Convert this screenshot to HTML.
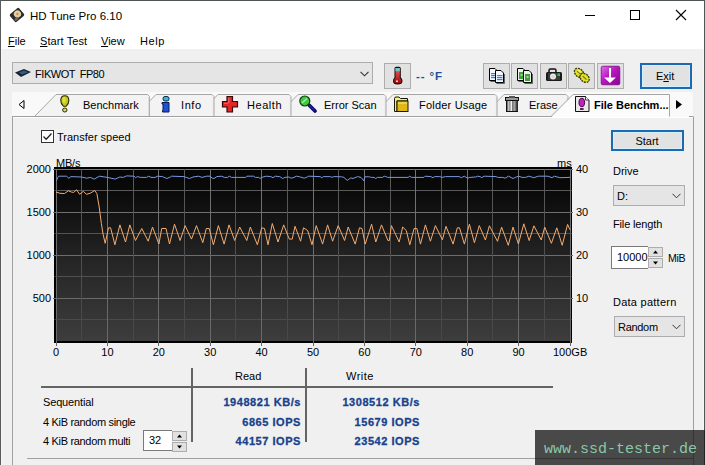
<!DOCTYPE html>
<html><head><meta charset="utf-8"><style>
html,body{margin:0;padding:0;width:705px;height:465px;overflow:hidden;background:#f0f0f0}
.b{position:absolute}
.t{position:absolute;white-space:nowrap;font-family:'Liberation Sans', sans-serif}
u{text-decoration:underline;text-underline-offset:1px}
</style></head><body>
<div class="b" style="left:0px;top:0px;width:705px;height:465px;background:#f0f0f0"></div>
<div class="b" style="left:0px;top:0px;width:705px;height:49px;background:#ffffff"></div>
<div class="b" style="left:1px;top:49px;width:1px;height:416px;background:#f7f7f7"></div>
<div class="b" style="left:703px;top:49px;width:1px;height:416px;background:#f7f7f7"></div>
<div class="b" style="left:0px;top:0px;width:705px;height:1px;background:#4f5454"></div>
<div class="b" style="left:0px;top:0px;width:1px;height:465px;background:#585c5c"></div>
<div class="b" style="left:704px;top:0px;width:1px;height:465px;background:#4f5454"></div>
<svg class="b" style="left:8px;top:6px" width="18" height="18" viewBox="0 0 18 18">
<g transform="rotate(-40 9 9)"><rect x="3" y="4" width="12" height="10" rx="1.5" fill="#2a2a2a"/>
<circle cx="10" cy="8.5" r="3.6" fill="#e9cfa0"/><circle cx="10" cy="8.5" r="1.2" fill="#b89660"/>
<rect x="4" y="10.5" width="4" height="2.5" fill="#6a6a6a"/></g></svg>
<div class="t" style="left:30px;top:11px;font-size:11.5px;line-height:11.5px;color:#000;font-weight:normal;">HD Tune Pro 6.10</div>
<div class="b" style="left:585px;top:15px;width:10px;height:1px;background:#000"></div>
<div class="b" style="left:630px;top:10px;width:10px;height:10px;border:1px solid #000;box-sizing:border-box"></div>
<svg class="b" style="left:675px;top:9px" width="12" height="12" viewBox="0 0 12 12">
<path d="M1 1L11 11M11 1L1 11" stroke="#000" stroke-width="1.1"/></svg>
<div class="t" style="left:8px;top:36px;font-size:11px;line-height:11px;color:#000"><u>F</u>ile</div>
<div class="t" style="left:40px;top:36px;font-size:11px;line-height:11px;color:#000;letter-spacing:0.1px"><u>S</u>tart Test</div>
<div class="t" style="left:101px;top:36px;font-size:11px;line-height:11px;color:#000"><u>V</u>iew</div>
<div class="t" style="left:140px;top:36px;font-size:11px;line-height:11px;color:#000;letter-spacing:0.6px">Help</div>
<div class="b" style="left:12px;top:62px;width:361px;height:22px;background:#e5e5e5;border:1px solid #adadad;box-sizing:border-box"></div>
<svg class="b" style="left:14px;top:68px" width="18" height="10" viewBox="0 0 18 10">
<path d="M1 4.5L10 1L17 4L7 9Z" fill="#1a2430"/><path d="M5 4.5L10 2.5L14 4.2L8 6.5Z" fill="#2d5d8f"/></svg>
<div class="t" style="left:35px;top:69px;font-size:11px;line-height:11px;color:#000;font-weight:normal;letter-spacing:-0.45px;word-spacing:2px">FIKWOT&nbsp;FP80</div>
<svg class="b" style="left:360px;top:71px" width="9" height="6" viewBox="0 0 9 6">
<path d="M0.5 0.8L4.5 4.8L8.5 0.8" fill="none" stroke="#333" stroke-width="1.1"/></svg>
<div class="b" style="left:384px;top:63px;width:27px;height:26px;background:#e1e1e1;border:1px solid #adadad;box-sizing:border-box"></div>
<svg class="b" style="left:391px;top:66px" width="13" height="20" viewBox="0 0 13 20">
<defs><linearGradient id="th" x1="0" y1="0" x2="0" y2="1"><stop offset="0" stop-color="#f06060"/><stop offset="1" stop-color="#a00808"/></linearGradient></defs>
<path d="M3.5 2.5Q3.5 0.8 5.2 0.8H8Q9.8 0.8 9.8 2.5V11.5Q11.5 12.8 11.5 15Q11.5 18.5 6.7 18.5Q2 18.5 2 15Q2 12.8 3.5 11.5Z" fill="#1a0505"/>
<path d="M4.5 2.2H8.8V11.9Q10.5 13 10.5 15Q10.5 17.5 6.7 17.5Q3 17.5 3 15Q3 13 4.5 11.9Z" fill="url(#th)"/>
<rect x="4.5" y="2" width="4.3" height="3.2" fill="#70c8c8"/>
<rect x="5" y="14.5" width="2" height="1.6" fill="#f8d0d0"/></svg>
<div class="t" style="left:416px;top:71px;font-size:11.5px;line-height:11.5px;color:#1f4e9a;font-weight:bold;letter-spacing:0.9px">--&nbsp;°F</div>
<div class="b" style="left:483px;top:63px;width:27px;height:26px;background:#e1e1e1;border:1px solid #adadad;box-sizing:border-box"></div>
<div class="b" style="left:511px;top:63px;width:27px;height:26px;background:#e1e1e1;border:1px solid #adadad;box-sizing:border-box"></div>
<div class="b" style="left:540px;top:63px;width:27px;height:26px;background:#e1e1e1;border:1px solid #adadad;box-sizing:border-box"></div>
<div class="b" style="left:568px;top:63px;width:27px;height:26px;background:#e1e1e1;border:1px solid #adadad;box-sizing:border-box"></div>
<div class="b" style="left:597px;top:63px;width:27px;height:26px;background:#e1e1e1;border:1px solid #adadad;box-sizing:border-box"></div>
<svg class="b" style="left:489px;top:68px" width="17" height="16" viewBox="0 0 17 16"><path d="M0.5 0.5H6L8.5 3V12.5H0.5Z" fill="#f4f8ff" stroke="#000" stroke-width="1"/><path d="M9.5 4V13.5H1.5" fill="none" stroke="#444" stroke-width="0.8"/><rect x="2" y="5" width="5.5" height="1.2" fill="#3080e0"/><rect x="2" y="7" width="5.5" height="1.2" fill="#3080e0"/><rect x="2" y="9" width="5.5" height="1.2" fill="#3080e0"/><path d="M6.5 2.5H12L14.5 5V14.5H6.5Z" fill="#f4f8ff" stroke="#000" stroke-width="1"/><path d="M15.5 6V15.5H7.5" fill="none" stroke="#444" stroke-width="0.8"/><rect x="8" y="7" width="5.5" height="1.2" fill="#3080e0"/><rect x="8" y="9" width="5.5" height="1.2" fill="#3080e0"/><rect x="8" y="11" width="5.5" height="1.2" fill="#3080e0"/></svg>
<svg class="b" style="left:517px;top:68px" width="17" height="16" viewBox="0 0 17 16"><path d="M0.5 0.5H6L8.5 3V12.5H0.5Z" fill="#f0f4f0" stroke="#000" stroke-width="1"/><path d="M9.5 4V13.5H1.5" fill="none" stroke="#444" stroke-width="0.8"/><rect x="2" y="4" width="5" height="7" fill="#3aa040"/><rect x="3.5" y="6" width="2" height="2" fill="#a0e060"/><path d="M6.5 2.5H12L14.5 5V14.5H6.5Z" fill="#f0f4f0" stroke="#000" stroke-width="1"/><path d="M15.5 6V15.5H7.5" fill="none" stroke="#444" stroke-width="0.8"/><rect x="8" y="6" width="5" height="7" fill="#3aa040"/><rect x="9.5" y="8" width="2" height="2" fill="#a0e060"/></svg>
<svg class="b" style="left:545px;top:68px" width="18" height="14" viewBox="0 0 18 14">
<rect x="4" y="1" width="7" height="4" rx="1.5" fill="none" stroke="#111" stroke-width="1.5"/>
<rect x="1" y="4" width="16" height="9" rx="1.5" fill="#1a1a1a"/>
<rect x="3" y="5" width="12" height="7" fill="#3a3a3a"/>
<circle cx="8" cy="8.5" r="3" fill="#f0f0f0"/><circle cx="8" cy="8.5" r="2" fill="#d8d8d8"/>
<rect x="12.5" y="5.5" width="2.5" height="2.5" fill="#30c050"/></svg>
<svg class="b" style="left:572px;top:66px" width="20" height="19" viewBox="0 0 20 19">
<g transform="rotate(42 10 9.5)">
<ellipse cx="6" cy="9.5" rx="5.2" ry="3.8" fill="#e0e028" stroke="#3a3a00" stroke-width="1.3" stroke-dasharray="2 0.8"/>
<ellipse cx="13.5" cy="9.5" rx="5.2" ry="3.8" fill="#e0e028" stroke="#3a3a00" stroke-width="1.3" stroke-dasharray="2 0.8"/>
<path d="M3.5 9.5h5M11 9.5h5" stroke="#6a6a10" stroke-width="1"/>
<ellipse cx="5" cy="8" rx="2" ry="1" fill="#f8f890" opacity="0.8"/>
</g></svg>
<svg class="b" style="left:600px;top:65px" width="21" height="21" viewBox="0 0 21 21">
<defs><linearGradient id="mg" x1="0" y1="0" x2="1" y2="1"><stop offset="0" stop-color="#e070e8"/><stop offset="0.45" stop-color="#b818c0"/><stop offset="1" stop-color="#8a0090"/></linearGradient></defs>
<rect x="0.5" y="0.5" width="20" height="20" rx="2" fill="#f8f0f8"/>
<rect x="1.2" y="1.2" width="18.6" height="18.6" rx="1.5" fill="url(#mg)" stroke="#70007a" stroke-width="0.8"/>
<path d="M9 3H11V12.5H15.9L10 18L4.1 12.5H9Z" fill="#fff"/></svg>
<div class="b" style="left:640px;top:63px;width:52px;height:26px;background:#e2e2e2;border:2px solid #1d6ab2;box-shadow:inset 0 0 0 1px #d4f0fc;box-sizing:border-box"></div>
<div class="t" style="left:656px;top:71px;font-size:11px;line-height:11px;color:#000;font-weight:normal;">E<u>x</u>it</div>
<div class="b" style="left:12px;top:92px;width:681px;height:25px;background:#f9f9f9"></div>
<svg class="b" style="left:0;top:0" width="705" height="125" viewBox="0 0 705 125"><path d="M482 117L504 95H566L568 97V117Z" fill="#f3f3f3"/><path d="M482 117L504 94.5H566L568 96.5V117" fill="none" stroke="#a6a6a6" stroke-width="1"/><path d="M567.4 97V116" stroke="#c8c8c8" stroke-width="0.8"/><path d="M371 117L393 95H495L497 97V117Z" fill="#f3f3f3"/><path d="M371 117L393 94.5H495L497 96.5V117" fill="none" stroke="#a6a6a6" stroke-width="1"/><path d="M496.4 97V116" stroke="#c8c8c8" stroke-width="0.8"/><path d="M276 117L298 95H384L386 97V117Z" fill="#f3f3f3"/><path d="M276 117L298 94.5H384L386 96.5V117" fill="none" stroke="#a6a6a6" stroke-width="1"/><path d="M385.4 97V116" stroke="#c8c8c8" stroke-width="0.8"/><path d="M196 117L218 95H289L291 97V117Z" fill="#f3f3f3"/><path d="M196 117L218 94.5H289L291 96.5V117" fill="none" stroke="#a6a6a6" stroke-width="1"/><path d="M290.4 97V116" stroke="#c8c8c8" stroke-width="0.8"/><path d="M134 117L156 95H212L214 97V117Z" fill="#f3f3f3"/><path d="M134 117L156 94.5H212L214 96.5V117" fill="none" stroke="#a6a6a6" stroke-width="1"/><path d="M213.4 97V116" stroke="#c8c8c8" stroke-width="0.8"/><path d="M34 117L56 95H147.5L149.5 97V117Z" fill="#f3f3f3"/><path d="M34 117L56 94.5H147.5L149.5 96.5V117" fill="none" stroke="#a6a6a6" stroke-width="1"/><path d="M148.9 97V116" stroke="#c8c8c8" stroke-width="0.8"/><path d="M12 116.5H560" stroke="#a0a0a0" stroke-width="1"/><path d="M669 116.5H690" stroke="#fafafa" stroke-width="1"/><path d="M689 116.5H693.5" stroke="#a0a0a0" stroke-width="1"/><path d="M551 117.5L573 95H669.5V117.5Z" fill="#fcfcfc"/><path d="M551 116.5L573 94.5H669.5V116.5" fill="none" stroke="#a6a6a6" stroke-width="1"/><path d="M24 100.5L19 104.5L24 108.5Z" fill="#f9f9f9" stroke="#000" stroke-width="1"/><path d="M676 100L682 104.5L676 109Z" fill="#000"/></svg>
<svg class="b" style="left:59px;top:95px" width="12" height="18" viewBox="0 0 12 18">
<path d="M5.8 0.8Q9.8 0.8 9.8 5.5Q9.8 9 7.2 11.2H4.4Q1.8 9 1.8 5.5Q1.8 0.8 5.8 0.8Z" fill="#c8c818" stroke="#2a2a00" stroke-width="1.1"/>
<ellipse cx="5" cy="5" rx="1.6" ry="3" fill="#e8e860" opacity="0.7"/>
<ellipse cx="5.8" cy="15" rx="2.2" ry="2" fill="#d8d870" stroke="#2a2a00" stroke-width="1"/></svg>
<svg class="b" style="left:160px;top:95px" width="12" height="18" viewBox="0 0 12 18">
<rect x="3" y="1.5" width="6" height="4.5" rx="2" fill="#40b0e0" stroke="#0a2a40" stroke-width="1"/>
<path d="M2 7.5H9V17H2.5V15.5H3V9H2Z" fill="#2050d8" stroke="#0a1a50" stroke-width="1"/></svg>
<svg class="b" style="left:221px;top:95px" width="18" height="18" viewBox="0 0 18 18">
<path d="M6 1.5H11.5V6.5H16.5V12H11.5V17H6V12H1.5V6.5H6Z" fill="#e02828" stroke="#3a0808" stroke-width="1.2"/>
<path d="M7 3H8.5V8H3V9H7Z" fill="#f08080" opacity="0.6"/></svg>
<svg class="b" style="left:298px;top:95px" width="19" height="19" viewBox="0 0 19 19">
<path d="M11.5 10.5L17 16" stroke="#0a0a60" stroke-width="3.6" stroke-linecap="round"/>
<path d="M11.5 10.5L16 15" stroke="#2020b0" stroke-width="1.6" stroke-linecap="round"/>
<circle cx="6.8" cy="6" r="5" fill="#40c840" stroke="#0a400a" stroke-width="1.2"/>
<path d="M4 8L9 3.5" stroke="#a0f0a0" stroke-width="1.5"/></svg>
<svg class="b" style="left:393px;top:95px" width="18" height="18" viewBox="0 0 18 18">
<path d="M1.5 3.5Q1.5 2 3 2H6L7.5 3.5H14.5V6H4V16.5H1.5Z" fill="#f0f080" stroke="#1a1a00" stroke-width="1"/>
<rect x="4" y="6" width="11" height="10.5" fill="#e0b818" stroke="#1a1a00" stroke-width="1"/>
<rect x="5" y="7" width="9" height="2" fill="#f0e060" opacity="0.7"/></svg>
<svg class="b" style="left:504px;top:95px" width="17" height="18" viewBox="0 0 17 18">
<rect x="1.5" y="2.5" width="13" height="3" fill="#9a9a9a" stroke="#111" stroke-width="1"/>
<rect x="5" y="1" width="6" height="2" fill="#555"/>
<rect x="2.5" y="5.5" width="11" height="11" fill="#7a7a7a" stroke="#111" stroke-width="1"/>
<rect x="4" y="6" width="1.5" height="10" fill="#c0c0c0"/><rect x="6.5" y="6" width="1.5" height="10" fill="#f0f0f0"/>
<rect x="9.5" y="6" width="1.5" height="10" fill="#a0a0a0"/><rect x="12" y="6" width="1.5" height="10" fill="#4a4a4a"/></svg>
<svg class="b" style="left:575px;top:95px" width="16" height="18" viewBox="0 0 16 18">
<path d="M0.5 1.5H10.5L14 5V16.5H0.5Z" fill="#e8e8e8" stroke="#111" stroke-width="1"/>
<path d="M10.5 1.5V5H14" fill="#fff" stroke="#111" stroke-width="0.8"/>
<ellipse cx="6.8" cy="7.5" rx="2.8" ry="4.2" fill="#c020c0" stroke="#400040" stroke-width="1"/>
<rect x="5" y="13" width="3.6" height="2" fill="#602060"/></svg>
<div class="t" style="left:83px;top:100px;font-size:11px;line-height:11px;color:#000;font-weight:normal;">Benchmark</div>
<div class="t" style="left:181px;top:100px;font-size:11px;line-height:11px;color:#000;font-weight:normal;letter-spacing:0.6px">Info</div>
<div class="t" style="left:247px;top:100px;font-size:11px;line-height:11px;color:#000;font-weight:normal;letter-spacing:0.55px">Health</div>
<div class="t" style="left:324px;top:100px;font-size:11px;line-height:11px;color:#000;font-weight:normal;">Error Scan</div>
<div class="t" style="left:419px;top:100px;font-size:11px;line-height:11px;color:#000;font-weight:normal;letter-spacing:0.2px">Folder Usage</div>
<div class="t" style="left:529px;top:100px;font-size:11px;line-height:11px;color:#000;font-weight:normal;">Erase</div>
<div class="t" style="left:594px;top:100px;font-size:11px;line-height:11px;color:#000;font-weight:bold;">File Benchm...</div>
<div class="b" style="left:12px;top:117px;width:1px;height:348px;background:#a0a0a0"></div>
<div class="b" style="left:693px;top:117px;width:1px;height:348px;background:#a0a0a0"></div>
<div class="b" style="left:13px;top:117px;width:680px;height:1px;background:#ffffff"></div>
<div class="b" style="left:41px;top:130px;width:13px;height:13px;background:#fff;border:1px solid #333;box-sizing:border-box"></div>
<svg class="b" style="left:41px;top:130px" width="13" height="13" viewBox="0 0 13 13">
<path d="M2.5 6.5L5.2 9.2L10.5 3.5" fill="none" stroke="#222" stroke-width="1.3"/></svg>
<div class="t" style="left:57px;top:132px;font-size:11px;line-height:11px;color:#000;font-weight:normal;">Transfer speed</div>
<svg class="b" style="left:0;top:0" width="705" height="465" viewBox="0 0 705 465"><defs><linearGradient id="g" x1="0" y1="0" x2="0" y2="1"><stop offset="0" stop-color="#050505"/><stop offset="0.14" stop-color="#0b0b0b"/><stop offset="0.55" stop-color="#262626"/><stop offset="1" stop-color="#3d3d3d"/></linearGradient><linearGradient id="glM" gradientUnits="userSpaceOnUse" x1="0" y1="169" x2="0" y2="341"><stop offset="0" stop-color="#727272"/><stop offset="1" stop-color="#686868"/></linearGradient><linearGradient id="glm" gradientUnits="userSpaceOnUse" x1="0" y1="169" x2="0" y2="341"><stop offset="0" stop-color="#5a5a5a"/><stop offset="1" stop-color="#474747"/></linearGradient></defs><rect x="54" y="167" width="518" height="176" fill="#000"/><rect x="56" y="169" width="515" height="172" fill="url(#g)"/><path d="M56 169.5H571" stroke="#787878" stroke-width="1"/><path d="M56 190.5H571" stroke="#5a5a5a" stroke-width="1"/><path d="M56 212.5H571" stroke="#707070" stroke-width="1"/><path d="M56 233.5H571" stroke="#545454" stroke-width="1"/><path d="M56 255.5H571" stroke="#6d6d6d" stroke-width="1"/><path d="M56 276.5H571" stroke="#505050" stroke-width="1"/><path d="M56 298.5H571" stroke="#6a6a6a" stroke-width="1"/><path d="M56 319.5H571" stroke="#4a4a4a" stroke-width="1"/><path d="M56 341.5H571" stroke="#686868" stroke-width="1"/><rect x="56.0" y="169" width="1" height="172" fill="url(#glM)"/><rect x="81.0" y="169" width="1" height="172" fill="url(#glm)"/><rect x="107.0" y="169" width="1" height="172" fill="url(#glM)"/><rect x="133.0" y="169" width="1" height="172" fill="url(#glm)"/><rect x="158.0" y="169" width="1" height="172" fill="url(#glM)"/><rect x="184.0" y="169" width="1" height="172" fill="url(#glm)"/><rect x="210.0" y="169" width="1" height="172" fill="url(#glM)"/><rect x="235.0" y="169" width="1" height="172" fill="url(#glm)"/><rect x="261.0" y="169" width="1" height="172" fill="url(#glM)"/><rect x="287.0" y="169" width="1" height="172" fill="url(#glm)"/><rect x="313.0" y="169" width="1" height="172" fill="url(#glM)"/><rect x="338.0" y="169" width="1" height="172" fill="url(#glm)"/><rect x="364.0" y="169" width="1" height="172" fill="url(#glM)"/><rect x="390.0" y="169" width="1" height="172" fill="url(#glm)"/><rect x="415.0" y="169" width="1" height="172" fill="url(#glM)"/><rect x="441.0" y="169" width="1" height="172" fill="url(#glm)"/><rect x="467.0" y="169" width="1" height="172" fill="url(#glM)"/><rect x="492.0" y="169" width="1" height="172" fill="url(#glm)"/><rect x="518.0" y="169" width="1" height="172" fill="url(#glM)"/><rect x="544.0" y="169" width="1" height="172" fill="url(#glm)"/><rect x="570.0" y="169" width="1" height="172" fill="url(#glM)"/><rect x="54" y="341" width="518" height="2" fill="#000"/><rect x="571" y="167" width="1" height="176" fill="#000"/><path d="M56.5 341V346" stroke="#686868" stroke-width="1"/><path d="M107.5 341V346" stroke="#686868" stroke-width="1"/><path d="M158.5 341V346" stroke="#686868" stroke-width="1"/><path d="M210.5 341V346" stroke="#686868" stroke-width="1"/><path d="M261.5 341V346" stroke="#686868" stroke-width="1"/><path d="M313.5 341V346" stroke="#686868" stroke-width="1"/><path d="M364.5 341V346" stroke="#686868" stroke-width="1"/><path d="M415.5 341V346" stroke="#686868" stroke-width="1"/><path d="M467.5 341V346" stroke="#686868" stroke-width="1"/><path d="M518.5 341V346" stroke="#686868" stroke-width="1"/><path d="M570.5 341V346" stroke="#686868" stroke-width="1"/><path d="M53 169.5H57M569 169.5H573" stroke="#727272" stroke-width="1"/><path d="M54 190.5H57M569 190.5H572" stroke="#5a5a5a" stroke-width="1" opacity="0.6"/><path d="M53 212.5H57M569 212.5H573" stroke="#707070" stroke-width="1"/><path d="M54 233.5H57M569 233.5H572" stroke="#545454" stroke-width="1" opacity="0.6"/><path d="M53 255.5H57M569 255.5H573" stroke="#6d6d6d" stroke-width="1"/><path d="M54 276.5H57M569 276.5H572" stroke="#505050" stroke-width="1" opacity="0.6"/><path d="M53 298.5H57M569 298.5H573" stroke="#6a6a6a" stroke-width="1"/><path d="M54 319.5H57M569 319.5H572" stroke="#4a4a4a" stroke-width="1" opacity="0.6"/><polyline points="56.0,192.0 60.0,193.3 64.5,193.5 68.3,190.8 71.3,192.0 73.6,192.4 76.6,189.8 79.6,194.3 83.4,191.3 86.4,194.3 90.1,193.3 94.7,190.5 96.9,193.6 99.2,207.0 101.4,223.7 103.0,234.0 105.2,243.3 108.5,227.8 110.6,227.8 114.9,244.8 119.9,224.9 125.5,242.0 129.8,224.9 135.5,240.5 141.8,228.5 148.2,241.2 152.5,227.0 158.9,244.0 161.7,228.5 166.0,228.5 169.5,244.0 174.5,224.2 180.1,240.5 185.1,225.6 191.5,239.1 196.5,225.6 202.8,242.7 206.3,228.5 209.2,228.5 213.4,244.8 218.4,225.6 224.1,244.1 229.0,224.9 234.7,240.5 239.7,227.0 246.8,240.5 250.3,227.0 257.4,244.8 261.7,227.8 264.5,228.5 268.0,244.8 272.3,223.5 278.0,242.0 283.7,224.9 289.3,239.1 292.2,239.1 295.0,226.3 300.6,241.2 303.5,227.8 307.7,230.6 312.0,244.8 316.2,225.6 322.6,244.1 327.6,224.9 332.6,241.2 338.2,225.6 344.6,240.5 348.2,227.0 355.2,244.1 359.5,227.8 362.0,228.5 365.2,244.1 371.6,224.2 375.8,242.0 381.5,224.9 387.9,240.5 389.3,240.5 391.4,225.6 399.2,242.0 402.7,227.0 406.3,230.6 409.8,244.8 414.1,228.5 416.9,228.5 420.5,244.1 425.4,224.9 430.4,241.2 435.4,225.6 442.4,239.8 446.0,226.3 453.1,244.1 457.3,227.8 459.5,227.8 464.4,244.1 469.4,224.2 474.4,242.7 479.3,225.6 485.4,240.0 489.4,225.8 497.5,241.3 501.6,227.1 508.3,245.3 513.0,227.1 518.4,244.0 523.8,223.8 529.2,240.6 533.9,225.8 541.3,240.0 544.7,227.1 551.4,243.3 556.8,227.8 562.2,245.3 567.6,224.4 570.0,229.8" fill="none" stroke="#f4ac70" stroke-width="1" stroke-linejoin="miter"/><polyline points="56.3,180.8 58.5,176.2 66.5,176.2 68.8,178.2 71.0,176.6 81.2,177.0 86.9,178.2 90.3,177.4 94.3,179.1 99.4,176.2 107.3,177.4 115.3,179.1 119.8,177.0 123.2,177.4 126.6,175.9 134.0,176.2 135.7,177.7 137.4,176.6 140.8,177.4 146.5,177.4 148.8,176.2 151.0,177.4 155.0,177.4 157.8,176.2 162.4,176.6 166.9,178.5 170.3,177.0 171.5,176.2 183.9,176.6 186.2,177.4 189.6,178.5 193.0,177.0 198.7,176.2 202.1,177.4 206.6,176.2 210.0,176.2 212.3,178.2 214.0,178.5 216.8,176.6 221.9,176.2 224.2,177.4 227.6,177.4 229.3,176.2 231.6,177.4 245.8,177.4 246.9,176.2 253.7,176.2 255.4,177.4 258.8,177.4 260.0,178.5 261.7,177.4 266.2,176.2 270.8,176.6 273.0,177.7 275.3,176.2 279.8,176.6 282.7,178.5 284.9,177.4 288.9,177.0 291.2,178.2 294.0,177.4 296.3,176.2 299.7,176.8 304.2,178.2 307.6,176.8 308.8,176.2 320.1,176.6 321.8,177.7 323.5,176.6 330.3,176.6 332.0,177.4 333.7,176.6 341.7,176.8 343.9,177.4 347.3,180.4 350.8,177.9 353.0,178.5 357.6,176.6 361.0,177.4 363.8,180.8 364.9,176.8 369.5,176.8 371.2,177.4 374.0,177.4 375.7,178.5 377.4,177.4 382.5,177.4 384.2,176.2 385.9,176.6 387.6,177.4 408.1,177.4 409.8,176.2 411.5,177.4 423.9,177.4 425.1,176.2 430.8,176.6 433.0,177.7 434.7,176.6 439.8,176.6 442.1,177.4 445.5,176.6 454.0,176.6 459.1,176.6 461.4,177.7 464.2,176.2 467.6,178.2 469.9,177.4 475.6,177.0 477.3,176.2 480.1,176.6 481.8,177.7 484.1,176.2 496.0,176.6 497.7,177.4 502.8,177.4 505.1,178.2 508.5,176.2 513.0,178.5 515.3,177.4 518.7,176.2 522.1,177.4 525.5,177.4 528.9,176.2 533.8,177.7 538.4,176.2 545.2,176.2 548.0,176.2 552.0,177.7 554.3,176.2 559.9,177.7 569.0,177.4 570.2,177.0" fill="none" stroke="#7898e0" stroke-width="1"/></svg>
<div class="t" style="right:654px;top:164px;font-size:11px;line-height:11px;color:#000;font-weight:normal;text-align:right;">2000</div>
<div class="t" style="right:654px;top:207px;font-size:11px;line-height:11px;color:#000;font-weight:normal;text-align:right;">1500</div>
<div class="t" style="right:654px;top:250px;font-size:11px;line-height:11px;color:#000;font-weight:normal;text-align:right;">1000</div>
<div class="t" style="right:654px;top:293px;font-size:11px;line-height:11px;color:#000;font-weight:normal;text-align:right;">500</div>
<div class="t" style="left:576px;top:164px;font-size:11px;line-height:11px;color:#000;font-weight:normal;">40</div>
<div class="t" style="left:576px;top:207px;font-size:11px;line-height:11px;color:#000;font-weight:normal;">30</div>
<div class="t" style="left:576px;top:250px;font-size:11px;line-height:11px;color:#000;font-weight:normal;">20</div>
<div class="t" style="left:576px;top:293px;font-size:11px;line-height:11px;color:#000;font-weight:normal;">10</div>
<div class="t" style="left:56px;top:158px;font-size:11px;line-height:11px;color:#000;font-weight:normal;letter-spacing:-0.2px">MB/s</div>
<div class="t" style="left:557px;top:158px;font-size:11px;line-height:11px;color:#000;font-weight:normal;">ms</div>
<div class="t" style="left:36.0px;width:40px;top:347px;font-size:11px;line-height:11px;color:#000;font-weight:normal;text-align:center;">0</div>
<div class="t" style="left:87.4px;width:40px;top:347px;font-size:11px;line-height:11px;color:#000;font-weight:normal;text-align:center;">10</div>
<div class="t" style="left:138.8px;width:40px;top:347px;font-size:11px;line-height:11px;color:#000;font-weight:normal;text-align:center;">20</div>
<div class="t" style="left:190.2px;width:40px;top:347px;font-size:11px;line-height:11px;color:#000;font-weight:normal;text-align:center;">30</div>
<div class="t" style="left:241.60000000000002px;width:40px;top:347px;font-size:11px;line-height:11px;color:#000;font-weight:normal;text-align:center;">40</div>
<div class="t" style="left:293.0px;width:40px;top:347px;font-size:11px;line-height:11px;color:#000;font-weight:normal;text-align:center;">50</div>
<div class="t" style="left:344.4px;width:40px;top:347px;font-size:11px;line-height:11px;color:#000;font-weight:normal;text-align:center;">60</div>
<div class="t" style="left:395.8px;width:40px;top:347px;font-size:11px;line-height:11px;color:#000;font-weight:normal;text-align:center;">70</div>
<div class="t" style="left:447.2px;width:40px;top:347px;font-size:11px;line-height:11px;color:#000;font-weight:normal;text-align:center;">80</div>
<div class="t" style="left:498.6px;width:40px;top:347px;font-size:11px;line-height:11px;color:#000;font-weight:normal;text-align:center;">90</div>
<div class="t" style="left:553px;top:347px;font-size:11px;line-height:11px;color:#000;font-weight:normal;">100GB</div>
<div class="b" style="left:41px;top:386px;width:512px;height:2px;background:#646464"></div>
<div class="b" style="left:191px;top:368px;width:2px;height:74px;background:#646464"></div>
<div class="b" style="left:305px;top:368px;width:2px;height:74px;background:#646464"></div>
<div class="t" style="left:235px;top:371px;font-size:11px;line-height:11px;color:#000;font-weight:normal;">Read</div>
<div class="t" style="left:346px;top:371px;font-size:11px;line-height:11px;color:#000;font-weight:normal;letter-spacing:0.5px">Write</div>
<div class="t" style="left:43px;top:397px;font-size:11px;line-height:11px;color:#000;font-weight:normal;letter-spacing:-0.15px">Sequential</div>
<div class="t" style="left:43px;top:417px;font-size:11px;line-height:11px;color:#000;font-weight:normal;letter-spacing:-0.32px">4 KiB random single</div>
<div class="t" style="left:43px;top:436px;font-size:11px;line-height:11px;color:#000;font-weight:normal;letter-spacing:-0.32px">4 KiB random multi</div>
<div class="t" style="right:404px;top:397px;font-size:11px;line-height:11px;color:#18428c;font-weight:bold;text-align:right;letter-spacing:0.55px;-webkit-text-stroke:0.3px #18428c">1948821 KB/s</div>
<div class="t" style="right:404px;top:417px;font-size:11px;line-height:11px;color:#18428c;font-weight:bold;text-align:right;letter-spacing:0.55px;-webkit-text-stroke:0.3px #18428c">6865 IOPS</div>
<div class="t" style="right:404px;top:436px;font-size:11px;line-height:11px;color:#18428c;font-weight:bold;text-align:right;letter-spacing:0.55px;-webkit-text-stroke:0.3px #18428c">44157 IOPS</div>
<div class="t" style="right:285px;top:397px;font-size:11px;line-height:11px;color:#18428c;font-weight:bold;text-align:right;letter-spacing:0.55px;-webkit-text-stroke:0.3px #18428c">1308512 KB/s</div>
<div class="t" style="right:285px;top:417px;font-size:11px;line-height:11px;color:#18428c;font-weight:bold;text-align:right;letter-spacing:0.55px;-webkit-text-stroke:0.3px #18428c">15679 IOPS</div>
<div class="t" style="right:285px;top:436px;font-size:11px;line-height:11px;color:#18428c;font-weight:bold;text-align:right;letter-spacing:0.55px;-webkit-text-stroke:0.3px #18428c">23542 IOPS</div>
<div class="b" style="left:143px;top:430px;width:29px;height:21px;background:#fff;border:1px solid #7a7a7a;border-right:none;box-sizing:border-box"></div>
<div class="t" style="left:149px;top:435px;font-size:11px;line-height:11px;color:#000;font-weight:normal;">32</div>
<div class="b" style="left:172px;top:431px;width:15px;height:10px;background:#e1e1e1;border:1px solid #adadad;box-sizing:border-box"></div>
<div class="b" style="left:172px;top:442px;width:15px;height:10px;background:#e1e1e1;border:1px solid #adadad;box-sizing:border-box"></div>
<svg class="b" style="left:172px;top:431px" width="15" height="21" viewBox="0 0 15 21">
<path d="M5 6.5L7.5 3.5L10 6.5Z" fill="#000"/>
<path d="M5 14.5L7.5 17.5L10 14.5Z" fill="#000"/></svg>
<div class="b" style="left:27px;top:458px;width:666px;height:1px;background:#a0a0a0"></div>
<div class="b" style="left:611px;top:130px;width:73px;height:21px;background:#e2e2e2;border:2px solid #1d6ab2;box-shadow:inset 0 0 0 1px #d4f0fc;box-sizing:border-box"></div>
<div class="t" style="left:617.0px;width:60px;top:136px;font-size:11px;line-height:11px;color:#000;font-weight:normal;text-align:center;">Start</div>
<div class="t" style="left:613px;top:166px;font-size:11px;line-height:11px;color:#000;font-weight:normal;">Drive</div>
<div class="b" style="left:613px;top:185px;width:72px;height:21px;background:#e5e5e5;border:1px solid #adadad;box-sizing:border-box"></div>
<div class="t" style="left:617px;top:191px;font-size:11px;line-height:11px;color:#000;font-weight:normal;">D:</div>
<svg class="b" style="left:672px;top:193px" width="9" height="6" viewBox="0 0 9 6">
<path d="M0.5 0.8L4.5 4.8L8.5 0.8" fill="none" stroke="#333" stroke-width="1"/></svg>
<div class="t" style="left:613px;top:219px;font-size:11px;line-height:11px;color:#000;font-weight:normal;letter-spacing:-0.15px">File length</div>
<div class="b" style="left:611px;top:246px;width:37px;height:23px;background:#fff;border:1px solid #7a7a7a;border-right:none;box-sizing:border-box"></div>
<div class="t" style="left:617px;top:252px;font-size:11px;line-height:11px;color:#000;font-weight:normal;">10000</div>
<div class="b" style="left:648px;top:247px;width:15px;height:10px;background:#e1e1e1;border:1px solid #adadad;box-sizing:border-box"></div>
<div class="b" style="left:648px;top:258px;width:15px;height:10px;background:#e1e1e1;border:1px solid #adadad;box-sizing:border-box"></div>
<svg class="b" style="left:648px;top:247px" width="15" height="21" viewBox="0 0 15 21">
<path d="M5 6.5L7.5 3.5L10 6.5Z" fill="#000"/>
<path d="M5 14.5L7.5 17.5L10 14.5Z" fill="#000"/></svg>
<div class="t" style="left:668px;top:253px;font-size:10.6px;line-height:10.6px;color:#000;font-weight:normal;letter-spacing:-0.3px">MiB</div>
<div class="t" style="left:613px;top:297px;font-size:11px;line-height:11px;color:#000;font-weight:normal;letter-spacing:0.25px">Data pattern</div>
<div class="b" style="left:614px;top:316px;width:71px;height:21px;background:#e5e5e5;border:1px solid #adadad;box-sizing:border-box"></div>
<div class="t" style="left:618px;top:322px;font-size:11px;line-height:11px;color:#000;font-weight:normal;letter-spacing:-0.3px">Random</div>
<svg class="b" style="left:672px;top:324px" width="9" height="6" viewBox="0 0 9 6">
<path d="M0.5 0.8L4.5 4.8L8.5 0.8" fill="none" stroke="#333" stroke-width="1"/></svg>
<div class="b" style="left:535px;top:430px;width:170px;height:35px;background:rgba(20,20,20,0.76)"></div>
<div class="t" style="left:544px;top:442px;font-size:15px;line-height:15px;color:#88c8a8;font-weight:normal;font-family:'Liberation Mono',monospace;">www.ssd-tester.de</div>

</body></html>
